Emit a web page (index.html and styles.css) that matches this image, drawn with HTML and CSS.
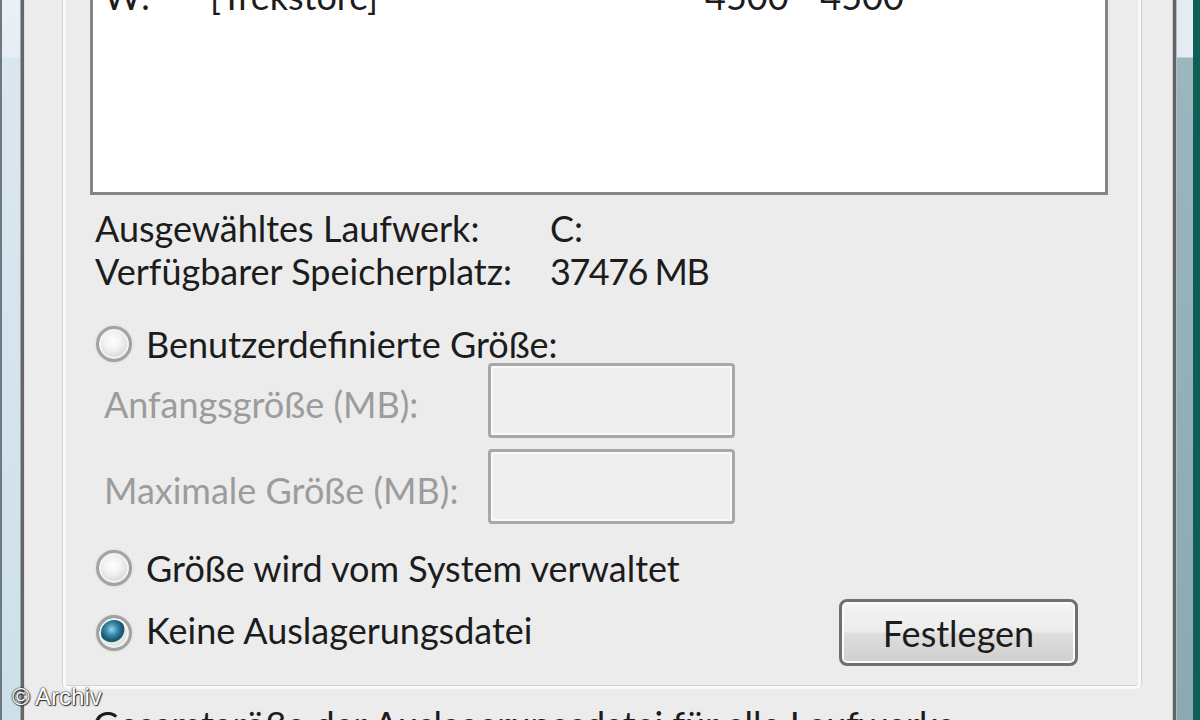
FILE: index.html
```html
<!DOCTYPE html>
<html lang="de">
<head>
<meta charset="utf-8">
<title>Virtueller Arbeitsspeicher</title>
<link rel="stylesheet" href="styles.css">
</head>
<body>
<div class="window">
  <div class="frame-left"></div>
  <div class="dialog">
    <div class="group">
      <div class="listbox">
        <div class="lb-row"><span class="c1">W:</span><span class="c2">[Trekstore]</span><span class="c3">4500 - 4500</span></div>
      </div>
      <div class="info">
        <div class="info-row"><span class="key">Ausgewähltes Laufwerk:</span><span>C:</span></div>
        <div class="info-row"><span class="key">Verfügbarer Speicherplatz:</span><span class="num">37476 MB</span></div>
      </div>
      <div class="radio-row first"><span class="radio"></span><span>Benutzerdefinierte Größe:</span></div>
      <div class="field-row"><span class="field-label">Anfangsgröße (MB):</span><span class="textbox"></span></div>
      <div class="field-row second"><span class="field-label">Maximale Größe (MB):</span><span class="textbox"></span></div>
      <div class="radio-row system"><span class="radio"></span><span>Größe wird vom System verwaltet</span></div>
      <div class="radio-row none"><span class="radio checked"></span><span class="lift">Keine Auslagerungsdatei</span><button class="btn">Festlegen</button></div>
    </div>
    <div class="total">Gesamtgröße der Auslagerungsdatei für alle Laufwerke</div>
  </div>
  <div class="frame-right"></div>
</div>
<div class="watermark">© Archiv</div>
</body>
</html>
```
FILE: styles.css
```css
html, body {
  margin: 0;
  padding: 0;
  width: 1200px;
  height: 720px;
  overflow: hidden;
}
body {
  font-family: Lato, "Open Sans", sans-serif;
  font-size: 36px;
  color: #1c1c1c;
  background: #ececec;
  position: relative;
}
.window {
  display: flex;
  width: 1200px;
  height: 720px;
}
.frame-left {
  flex: none;
  width: 25px;
  background:
    linear-gradient(to right, #6e7882 0 2px, transparent 2px 20px, #a3a8ad 20px 21px, #63676b 21px 24px, #dedede 24px 25px),
    linear-gradient(to bottom, #eaf0f5 0, #e6eef4 57px, #dbe7ef 58px, #cde0ea 720px);
}
.frame-right {
  flex: none;
  width: 28px;
  background:
    linear-gradient(to right, #c9cccf 0 1px, #606366 1px 4px, #b6babe 4px 5px, transparent 5px 21px, #0e5e58 21px 28px),
    linear-gradient(to bottom, #e4ebf1 0 57px, #9cb6be 58px, #8aa9b1 720px);
}
.dialog {
  flex: 1;
  min-width: 0;
  display: flex;
  flex-direction: column;
  background: #ececec;
}
.group {
  margin: 0 31px 0 38px;
  padding: 0 30px 20px 24px;
  border-left: 3px solid #f9f9f9;
  border-right: 3px solid #f9f9f9;
  border-bottom: 3px solid #f9f9f9;
  border-radius: 0 0 5px 5px;
  box-shadow: -1px 0 0 #d2d2d2, 1px 0 0 #d2d2d2, 0 -1px 0 #d2d2d2 inset;
}
.listbox {
  height: 192px;
  background: #fff;
  border: 3px solid #858585;
  border-top: none;
  overflow: hidden;
  padding-left: 11px;
}
.lb-row {
  display: flex;
  margin-top: -25px;
  line-height: 43px;
  white-space: nowrap;
}
.c1 { width: 106px; }
.c2 { width: 495px; }
.info {
  margin-top: 12px;
  padding-left: 5px;
}
.info-row {
  display: flex;
  line-height: 43px;
  white-space: nowrap;
}
.key { width: 455px; }
.num { letter-spacing: -1.5px; }
.radio-row {
  display: flex;
  align-items: center;
  height: 36px;
  line-height: 36px;
  padding-left: 6px;
  white-space: nowrap;
}
.radio-row.first { margin-top: 33px; }
.radio-row.system { margin-top: 26px; }
.radio-row.none {
  margin-top: 13px;
  height: 67px;
}
.lift { margin-bottom: 6px; }
.radio {
  flex: none;
  width: 30px;
  height: 30px;
  margin-right: 14px;
  border-radius: 50%;
  border: 3px solid #a2a2a2;
  background: radial-gradient(circle at 45% 40%, #ffffff 0, #f2f2f2 35%, #d9d9d9 70%, #e8e8e8 100%);
  box-shadow: inset 0 0 0 2px #f4f4f4, 0 0 2px #c4c4c4;
}
.radio.checked {
  background:
    radial-gradient(circle at 42% 38%, #9fd3e6 0, #3d8fb0 22%, #1b5f7d 40%, #23546a 48%, #eaeaea 52%, #d6d6d6 80%, #e6e6e6 100%);
}
.field-row {
  display: flex;
  align-items: center;
  height: 75px;
  margin-top: 1px;
  padding-left: 14px;
  color: #9c9c9c;
  white-space: nowrap;
}
.field-row.second { margin-top: 11px; }
.field-label {
  width: 384px;
  line-height: 43px;
  padding-top: 7px;
}
.textbox {
  flex: none;
  width: 241px;
  height: 69px;
  border: 3px solid #a8a8a8;
  border-radius: 4px;
  background: #efefef;
  box-shadow: inset 0 0 0 2px #fafafa;
}
.btn {
  margin-left: auto;
  margin-right: 30px;
  width: 239px;
  height: 67px;
  padding: 0;
  border: 3px solid #707070;
  border-radius: 8px;
  font-family: inherit;
  font-size: 36px;
  color: #1c1c1c;
  background: linear-gradient(to bottom, #f4f4f4 0, #ececec 48%, #dedede 52%, #cfcfcf 100%);
  box-shadow: inset 0 0 0 2px #fbfbfb;
}
.total {
  margin-top: 14px;
  padding-left: 68px;
  line-height: 43px;
  white-space: nowrap;
}
.watermark {
  position: absolute;
  left: 12px;
  top: 683px;
  font-family: "Liberation Sans", Arial, sans-serif;
  font-size: 24px;
  color: #ffffff;
  text-shadow: 0 0 2px #222, 0 0 1px #222, 1px 1px 1px #333;
}
```
